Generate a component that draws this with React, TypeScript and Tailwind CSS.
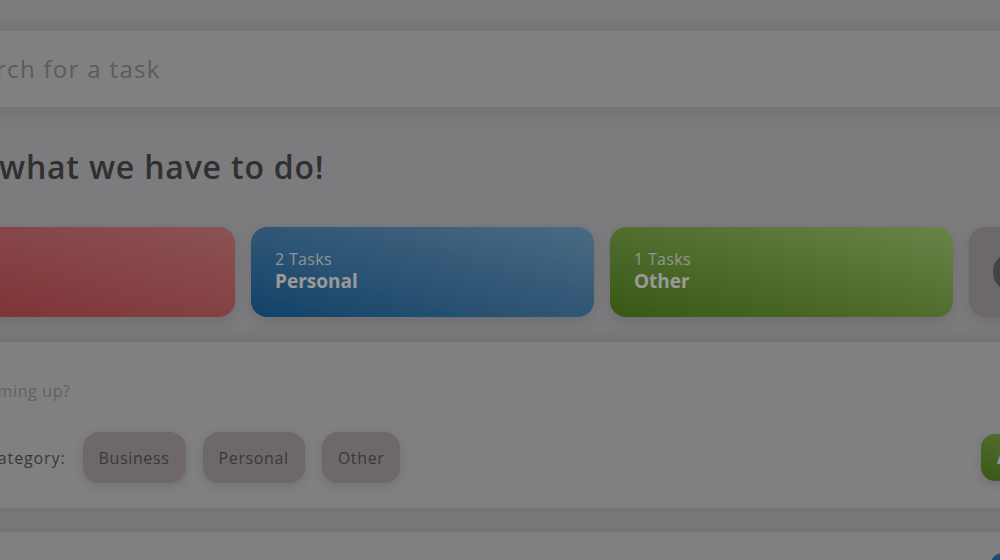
import React from "react";

const font = { fontFamily: '"Open Sans", "Noto Sans", sans-serif' };

function CategoryCard({ count, name, from, to }: { count: string; name: string; from: string; to: string }) {
  return (
    <div
      className={`w-[343px] h-[90px] shrink-0 rounded-[16px] bg-gradient-to-tr ${from} ${to} px-6 pt-[22px] shadow-[0_4px_14px_rgba(0,0,0,0.12)] flex flex-col`}
    >
      <span className="text-[16px] leading-[21px] text-white/90 font-normal tracking-[0.02em]">{count}</span>
      <span className="text-[19px] leading-[23px] text-white font-bold">{name}</span>
    </div>
  );
}

export default function App() {
  return (
    <div className="relative w-[1000px] h-[560px] overflow-hidden bg-[#cfcfd2]" style={font}>
      <div className="-ml-[140px] w-[1700px] flex flex-col pt-[31px]">
        {/* search */}
        <div className="h-[76px] bg-[#d5d5d5] shadow-[0_0_24px_rgba(0,0,0,0.12)] flex items-center pl-[92px]">
          <span className="text-[24px] tracking-[0.055em] text-[#9a9a9a]">Search for a task</span>
        </div>

        {/* heading + cards */}
        <div className="pl-[32px] pt-[40px]">
          <h1 className="-ml-[5px] text-[32px] leading-[40px] font-semibold tracking-[0.025em] text-[#505050]">
            Here&apos;s what we have to do!
          </h1>
          <div className="flex gap-4 mt-[40px]">
            <CategoryCard count="3 Tasks" name="Business" from="from-[#cf4d55]" to="to-[#e88a8d]" />
            <CategoryCard count="2 Tasks" name="Personal" from="from-[#1b6fae]" to="to-[#7db2db]" />
            <CategoryCard count="1 Tasks" name="Other" from="from-[#5f9220]" to="to-[#b0dc78]" />
            <div className="w-[343px] h-[90px] shrink-0 rounded-[16px] bg-[#b8b0b0] shadow-[0_4px_14px_rgba(0,0,0,0.12)] flex items-center pl-6">
              <div className="w-[40px] h-[40px] rounded-full bg-[#727272]" />
            </div>
          </div>
        </div>

        {/* new task panel */}
        <div className="mt-[25px] h-[166px] bg-[#d5d5d5] shadow-[0_0_24px_rgba(0,0,0,0.12)] pl-[60px] pt-[38px] flex flex-col">
          <span className="text-[16px] leading-[22px] tracking-[0.04em] text-[#a4a4a4]">What&apos;s coming up?</span>
          <div className="flex items-center mt-[30px]">
            <div className="w-[1061px] flex items-center">
              <span className="text-[16px] tracking-[0.055em] text-[#606060]">Select a category:</span>
              <div className="flex gap-[17px] ml-[17px]">
                {["Business", "Personal", "Other"].map((c) => (
                  <div
                    key={c}
                    className="h-[51px] px-4 rounded-[16px] bg-[#b8aeae] shadow-[0_3px_10px_rgba(0,0,0,0.12)] flex items-center text-[16px] tracking-[0.04em] text-[#606060]"
                  >
                    {c}
                  </div>
                ))}
              </div>
            </div>
            <div className="h-[47px] px-4 rounded-[14px] bg-gradient-to-tr from-[#5f9220] to-[#a5d06a] flex items-center text-white font-bold text-[16px] shadow-[0_3px_10px_rgba(0,0,0,0.12)]">
              Add task
            </div>
          </div>
        </div>

        {/* task list panel */}
        <div className="mt-[24px] h-[200px] bg-[#d5d5d5] shadow-[0_0_24px_rgba(0,0,0,0.12)] pt-[21px] pl-[1130px]">
          <div className="w-[26px] h-[26px] rounded-full bg-[#2a7fc0]" />
        </div>
      </div>

      {/* modal backdrop */}
      <div className="absolute inset-0 bg-black/40" />
    </div>
  );
}
